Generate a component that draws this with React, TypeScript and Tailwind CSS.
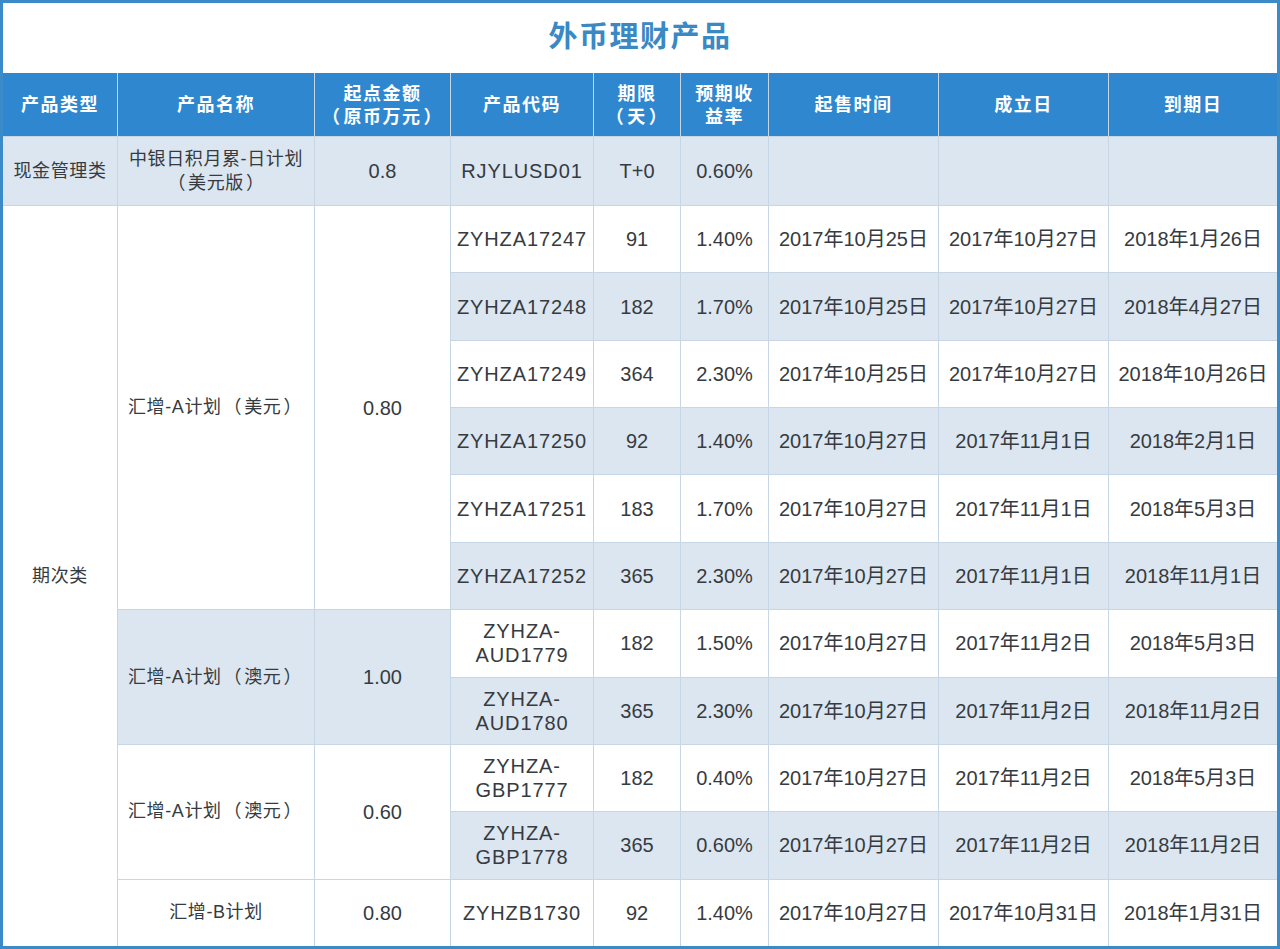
import React from "react";

const FONT = "font-['Liberation_Sans','Noto_Sans_CJK_SC',sans-serif]";
const WHITE = "bg-white";
const BLUE = "bg-[#dce6f0]";

function fw(text: string): React.ReactNode {
  const parts = text.split(/([（）])/);
  return parts.map((p, i) =>
    p === "（" || p === "）" ? (
      <span key={i} className="inline-block mx-[2px]">
        {p}
      </span>
    ) : (
      <React.Fragment key={i}>{p}</React.Fragment>
    )
  );
}

const headers: React.ReactNode[] = [
  "产品类型",
  "产品名称",
  <>起点金额<br />{fw("（原币万元）")}</>,
  "产品代码",
  <>期限<br />{fw("（天）")}</>,
  <>预期收<br />益率</>,
  "起售时间",
  "成立日",
  "到期日",
];

type Detail = [React.ReactNode, string, string, string, string, string];

const usd: Detail[] = [
  ["ZYHZA17247", "91", "1.40%", "2017年10月25日", "2017年10月27日", "2018年1月26日"],
  ["ZYHZA17248", "182", "1.70%", "2017年10月25日", "2017年10月27日", "2018年4月27日"],
  ["ZYHZA17249", "364", "2.30%", "2017年10月25日", "2017年10月27日", "2018年10月26日"],
  ["ZYHZA17250", "92", "1.40%", "2017年10月27日", "2017年11月1日", "2018年2月1日"],
  ["ZYHZA17251", "183", "1.70%", "2017年10月27日", "2017年11月1日", "2018年5月3日"],
  ["ZYHZA17252", "365", "2.30%", "2017年10月27日", "2017年11月1日", "2018年11月1日"],
];
const aud: Detail[] = [
  [<>ZYHZA-<br />AUD1779</>, "182", "1.50%", "2017年10月27日", "2017年11月2日", "2018年5月3日"],
  [<>ZYHZA-<br />AUD1780</>, "365", "2.30%", "2017年10月27日", "2017年11月2日", "2018年11月2日"],
];
const gbp: Detail[] = [
  [<>ZYHZA-<br />GBP1777</>, "182", "0.40%", "2017年10月27日", "2017年11月2日", "2018年5月3日"],
  [<>ZYHZA-<br />GBP1778</>, "365", "0.60%", "2017年10月27日", "2017年11月2日", "2018年11月2日"],
];
const bPlan: Detail = ["ZYHZB1730", "92", "1.40%", "2017年10月27日", "2017年10月31日", "2018年1月31日"];

function detailCells(d: Detail, bg: string, key: string) {
  return d.map((c, i) => (
    <div
      key={key + i}
      className={`${bg} flex items-center justify-center text-center whitespace-nowrap ${
        i === 0 ? "tracking-[0.9px] leading-[24px]" : ""
      }`}
    >
      {c}
    </div>
  ));
}

const nameCls = "flex items-center justify-center text-center text-[18px] tracking-[0.6px]";
const amtCls = "flex items-center justify-center";

export default function App() {
  return (
    <div
      className={`${FONT} w-[1280px] h-[949px] border-[3px] border-[#3b8bc9] bg-white flex flex-col text-[#363b41]`}
    >
      <div className="h-[70px] shrink-0 flex items-center justify-center">
        <h1 className="text-[29px] font-bold tracking-[1.5px] text-[#3a88c4]">外币理财产品</h1>
      </div>
      <div className="flex-1 grid grid-cols-[114px_196px_135px_142px_86px_87px_169px_169px_168px] grid-rows-[63px_68px_repeat(11,minmax(0,1fr))] gap-px bg-[#c6d6e4] text-[20px]">
        {headers.map((h, i) => (
          <div
            key={"h" + i}
            className="bg-[#2f88cf] text-white font-bold text-[18px] tracking-[1.5px] leading-[23px] pt-[2px] flex items-center justify-center text-center"
          >
            <div>{h}</div>
          </div>
        ))}

        {/* Row 1 */}
        <div className={`${BLUE} ${nameCls}`}>现金管理类</div>
        <div className={`${BLUE} ${nameCls} leading-[24px]`}>
          <div>
            中银日积月累-日计划<br />
            {fw("（美元版）")}
          </div>
        </div>
        <div className={`${BLUE} ${amtCls}`}>0.8</div>
        <div className={`${BLUE} flex items-center justify-center tracking-[0.9px]`}>RJYLUSD01</div>
        <div className={`${BLUE} flex items-center justify-center`}>T+0</div>
        <div className={`${BLUE} flex items-center justify-center`}>0.60%</div>
        <div className={BLUE}></div>
        <div className={BLUE}></div>
        <div className={BLUE}></div>

        {/* 期次类 */}
        <div className={`${WHITE} row-span-11 ${nameCls}`}>期次类</div>

        {/* USD group */}
        <div className={`${WHITE} row-span-6 ${nameCls}`}>
          <div>{fw("汇增-A计划（美元）")}</div>
        </div>
        <div className={`${WHITE} row-span-6 ${amtCls}`}>0.80</div>
        {usd.map((d, r) => (
          <React.Fragment key={"u" + r}>{detailCells(d, r % 2 === 0 ? WHITE : BLUE, "u" + r)}</React.Fragment>
        ))}

        {/* AUD group */}
        <div className={`${BLUE} row-span-2 ${nameCls}`}>
          <div>{fw("汇增-A计划（澳元）")}</div>
        </div>
        <div className={`${BLUE} row-span-2 ${amtCls}`}>1.00</div>
        {aud.map((d, r) => (
          <React.Fragment key={"a" + r}>{detailCells(d, r % 2 === 0 ? WHITE : BLUE, "a" + r)}</React.Fragment>
        ))}

        {/* GBP group */}
        <div className={`${WHITE} row-span-2 ${nameCls}`}>
          <div>{fw("汇增-A计划（澳元）")}</div>
        </div>
        <div className={`${WHITE} row-span-2 ${amtCls}`}>0.60</div>
        {gbp.map((d, r) => (
          <React.Fragment key={"g" + r}>{detailCells(d, r % 2 === 0 ? WHITE : BLUE, "g" + r)}</React.Fragment>
        ))}

        {/* B plan */}
        <div className={`${WHITE} ${nameCls}`}>汇增-B计划</div>
        <div className={`${WHITE} ${amtCls}`}>0.80</div>
        {detailCells(bPlan, WHITE, "b")}
      </div>
    </div>
  );
}
